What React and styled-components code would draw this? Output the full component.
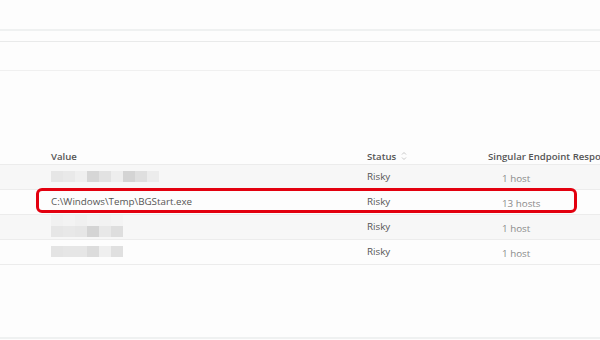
import React from 'react'
import styled, { createGlobalStyle } from 'styled-components'

const rows = [
  { blur: [['#e6e6e6', '#e9e9e9', '#efefef', '#d6d6d6', '#e2e2e2', '#eeeeee', '#d4d4d4', '#dfdfdf', '#ececec']], status: 'Risky', hosts: '1 host' },
  { value: 'C:\\Windows\\Temp\\BGStart.exe', status: 'Risky', hosts: '13 hosts', marked: true },
  { blur: [['#f1f1f1', '#f3f3f3', '#f0f0f0', '#f3f3f3', '#f2f2f2', '#f4f4f4'], ['#e6e6e6', '#e8e8e8', '#e6e6e6', '#d4d4d4', '#e8e8e8', '#dedede']], status: 'Risky', hosts: '1 host' },
  { blur: [['#e4e4e4', '#e6e6e6', '#e6e6e6', '#dcdcdc', '#efefef', '#e0e0e0']], status: 'Risky', hosts: '1 host' },
]

export default function App() {
  return (
    <>
      <Global />
      <Page>
        <Toolbar />
        <Filters />
        <Table>
          <Head>
            <span>Value</span>
            <span>
              Status
              <SortIcon viewBox="0 0 6 10">
                <path d="M1 3.5 L3 1.5 L5 3.5" />
                <path d="M1 6.5 L3 8.5 L5 6.5" />
              </SortIcon>
            </span>
            <span>Singular Endpoint Response</span>
          </Head>
          {rows.map((r, i) => (
            <Row key={i} striped={i % 2 === 0}>
              {r.marked && <Marker />}
              <Cell>
                {r.value ? r.value : (
                  <Mosaic>
                    {r.blur.map((line, j) => (
                      <MosaicLine key={j}>
                        {line.map((c, k) => <Block key={k} style={{ background: c }} />)}
                      </MosaicLine>
                    ))}
                  </Mosaic>
                )}
              </Cell>
              <Cell>{r.status}</Cell>
              <Hosts>{r.hosts}</Hosts>
            </Row>
          ))}
        </Table>
        <Footer />
      </Page>
    </>
  )
}

const Global = createGlobalStyle`
  body{
    margin:0;
    background:#fdfdfd;
    font-family:"Open Sans","Noto Sans",sans-serif;
  }
`

const Page = styled.div`
  width:600px;
  height:340px;
  display:flex;
  flex-direction:column;
  overflow:hidden;
`

const Toolbar = styled.div`
  height:29px;
  border-bottom:2px solid #eff1f1;
  flex-shrink:0;
`

const Filters = styled.div`
  margin-top:10px;
  height:28px;
  border-top:1px solid #e9eaea;
  border-bottom:1px solid #f0f0f0;
  flex-shrink:0;
`

const Table = styled.div`
  margin-top:77px;
  display:flex;
  flex-direction:column;
`

const Head = styled.div`
  display:grid;
  grid-template-columns:316px 121px 1fr;
  padding-left:51px;
  height:16px;
  align-items:center;
  border-bottom:1px solid #ececec;
  font-size:9.6px;
  font-weight:600;
  color:#555;
  white-space:nowrap;
  overflow:hidden;
  span{
    display:flex;
    align-items:center;
  }
`

const SortIcon = styled.svg`
  width:6px;
  height:10px;
  margin-left:5px;
  fill:none;
  stroke:#c8c8c8;
  stroke-width:1;
`

const Row = styled.div`
  position:relative;
  display:grid;
  grid-template-columns:316px 121px 1fr;
  padding-left:51px;
  height:24px;
  align-items:center;
  background:${({ striped }) => (striped ? '#f7f7f7' : '#fdfdfd')};
  border-bottom:1px solid #ececec;
  font-size:9.8px;
  color:#555;
`

const Marker = styled.div`
  position:absolute;
  left:36px;
  width:541px;
  top:-2px;
  height:25px;
  border:3px solid #e3000f;
  border-radius:6px;
  box-sizing:border-box;
`

const Cell = styled.div`
  white-space:nowrap;
  position:relative;
  top:-1px;
`

const Hosts = styled.div`
  color:#8a8a8a;
  padding-left:14px;
  white-space:nowrap;
  position:relative;
  top:1px;
`

const Mosaic = styled.div`
  display:flex;
  flex-direction:column;
`

const MosaicLine = styled.div`
  display:flex;
`

const Block = styled.div`
  width:12px;
  height:11px;
`

const Footer = styled.div`
  margin-top:auto;
  height:2px;
  background:#eff1f1;
  margin-bottom:1px;
`
